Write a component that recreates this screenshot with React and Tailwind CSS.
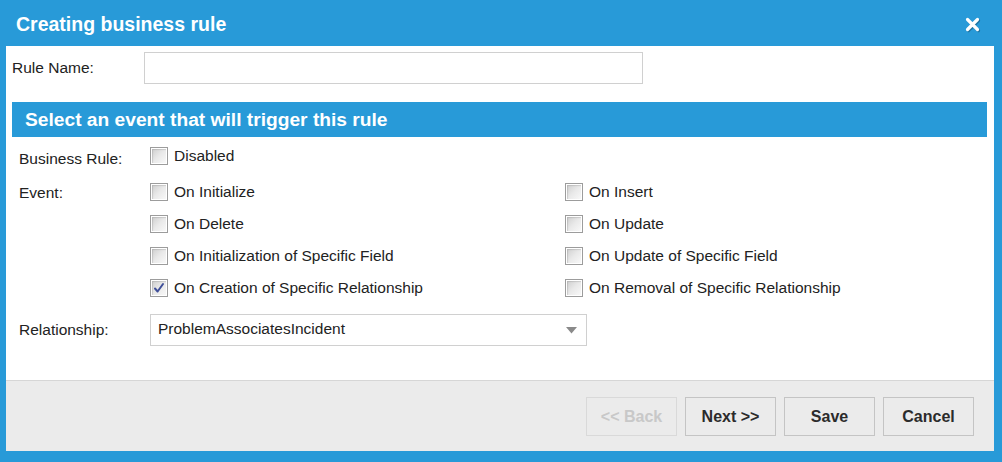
import React from 'react';

const Checkbox = ({ checked }) => (
    <div className="w-[18px] h-[18px] border border-[#9c9c9c] bg-white p-[1px] shrink-0">
        <div className="relative w-full h-full bg-gradient-to-br from-[#cfcfcf] via-[#e9e9e9] to-[#f8f8f8] shadow-[inset_1px_1px_1px_rgba(0,0,0,0.12)]">
            {checked && (
                <svg className="absolute inset-0" width="14" height="14" viewBox="0 0 14 14">
                    <path d="M3 7.5 L5.6 10.5 L11 3" fill="none" stroke="#3f4f99" strokeWidth="2" strokeLinecap="round" strokeLinejoin="round" />
                </svg>
            )}
        </div>
    </div>
);

const Option = ({ label, checked }) => (
    <div className="h-[32px] flex items-center gap-[6px]">
        <Checkbox checked={checked} />
        <span>{label}</span>
    </div>
);

const Button = ({ children, disabled }) => (
    <button
        className={
            'w-[91px] h-[39px] pt-[2px] border bg-[#ebebeb] font-bold text-[16px] ' +
            (disabled ? 'border-[#d9d9d9] text-[#c8c8c8]' : 'border-[#c4c4c4] text-[#2b2b2b]')
        }
    >
        {children}
    </button>
);

const App = () => {
    const leftEvents = [
        { label: 'On Initialize' },
        { label: 'On Delete' },
        { label: 'On Initialization of Specific Field' },
        { label: 'On Creation of Specific Relationship', checked: true },
    ];
    const rightEvents = [
        { label: 'On Insert' },
        { label: 'On Update' },
        { label: 'On Update of Specific Field' },
        { label: 'On Removal of Specific Relationship' },
    ];

    return (
        <div
            className="w-[1002px] h-[462px] bg-[#289ad8] flex flex-col pl-[6px] pr-[8px] pb-[11px] text-[15.5px] text-[#222]"
            style={{ fontFamily: '"Liberation Sans", Arial, sans-serif' }}
        >
            <div className="h-[46px] shrink-0 flex items-center justify-between pl-[10px] pr-[14px] pt-[4px] text-white">
                <h1 className="font-bold text-[19.5px]">Creating business rule</h1>
                <svg width="15" height="15" viewBox="0 0 15 15" className="-mt-[2px] drop-shadow-[1px_1px_0_rgba(0,0,0,0.25)]">
                    <path d="M2.5 2.5 L12.5 12.5 M12.5 2.5 L2.5 12.5" stroke="white" strokeWidth="3.2" strokeLinecap="round" />
                </svg>
            </div>

            <div className="flex-1 bg-white flex flex-col">
                <div className="flex-1 px-[6px] pr-[7px]">
                    <div className="flex items-center mt-[6px] h-[32px]">
                        <label className="w-[132px]">Rule Name:</label>
                        <input className="w-[499px] h-[32px] border border-[#d0d0d0] outline-none px-2" />
                    </div>

                    <div className="mt-[18px] h-[35px] bg-[#289ad8] text-white font-bold text-[19.2px] flex items-center pl-[13px] pt-[1px]">
                        Select an event that will trigger this rule
                    </div>

                    <div className="pl-[7px] mt-[3px]">
                        <div className="flex">
                            <div className="w-[131px] h-[32px] flex items-center pt-[5px]">Business Rule:</div>
                            <Option label="Disabled" />
                        </div>

                        <div className="flex mt-[4px]">
                            <div className="w-[131px] h-[32px] flex items-center pt-[2px]">Event:</div>
                            <div className="w-[415px]">
                                {leftEvents.map(e => (
                                    <Option key={e.label} label={e.label} checked={e.checked} />
                                ))}
                            </div>
                            <div>
                                {rightEvents.map(e => (
                                    <Option key={e.label} label={e.label} checked={e.checked} />
                                ))}
                            </div>
                        </div>

                        <div className="flex items-center mt-[10px]">
                            <div className="w-[131px]">Relationship:</div>
                            <div className="w-[437px] h-[32px] border border-[#d0d0d0] flex items-center justify-between pl-[7px] pr-[9px]">
                                <span className="-mt-[3px]">ProblemAssociatesIncident</span>
                                <svg width="11" height="7" viewBox="0 0 11 7">
                                    <path d="M0 0 L11 0 L5.5 6.5 Z" fill="#8a8a8a" />
                                </svg>
                            </div>
                        </div>
                    </div>
                </div>

                <div className="h-[71px] shrink-0 bg-[#ebebeb] border-t border-[#d6d6d6] flex items-center justify-end gap-[8px] pr-[20px]">
                    <Button disabled>&lt;&lt; Back</Button>
                    <Button>Next &gt;&gt;</Button>
                    <Button>Save</Button>
                    <Button>Cancel</Button>
                </div>
            </div>
        </div>
    );
};

export default App;
